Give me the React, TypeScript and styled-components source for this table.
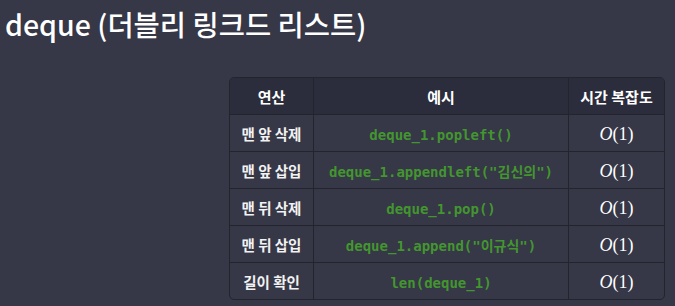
import styled, { createGlobalStyle } from "styled-components";

const GlobalStyle = createGlobalStyle`
  html, body {
    margin: 0;
    padding: 0;
    background: #363747;
  }
  body {
    font-family: "Noto Sans CJK KR", "Noto Sans", sans-serif;
    color: #ffffff;
  }
`;

const Page = styled.div`
  width: 675px;
  height: 306px;
  box-sizing: border-box;
  padding: 5px 10px 0 5px;
  display: flex;
  flex-direction: column;
`;

const Title = styled.h1`
  margin: 0;
  font-size: 28.5px;
  font-weight: 500;
  line-height: 38px;
`;

const TableWrap = styled.div`
  display: flex;
  justify-content: flex-end;
  margin-top: 34px;
`;

const Table = styled.table`
  width: 434px;
  border-collapse: separate;
  border-spacing: 0;
  border: 1px solid #23242e;
  border-radius: 5px;
  overflow: hidden;
  table-layout: fixed;
`;

const Th = styled.th<{ w: number }>`
  width: ${(p) => p.w}px;
  height: 36px;
  padding: 0;
  background: #2b2c3c;
  font-size: 15px;
  font-weight: 700;
  color: #ffffff;
  text-align: center;
  border-bottom: 1px solid #23242e;
  &:not(:last-child) {
    border-right: 1px solid #23242e;
  }
`;

const Td = styled.td`
  height: 36px;
  padding: 0;
  text-align: center;
  border-right: 1px solid #23242e;
  tr:not(:last-child) & {
    border-bottom: 1px solid #23242e;
  }
  &:last-child {
    border-right: none;
  }
`;

const OpCell = styled(Td)`
  font-size: 14.5px;
  font-weight: 700;
  color: #f2f2f2;
`;

const Code = styled.code`
  font-family: "DejaVu Sans Mono", "Noto Sans CJK KR", monospace;
  font-size: 14px;
  font-weight: 700;
  color: #43962f;
  white-space: nowrap;
`;

const Math = styled.span`
  font-family: "Liberation Serif", "DejaVu Serif", serif;
  font-size: 18px;
  color: #ffffff;
  i {
    font-style: italic;
  }
`;

const rows = [
  { op: "맨 앞 삭제", code: "deque_1.popleft()" },
  { op: "맨 앞 삽입", code: 'deque_1.appendleft("김신의")' },
  { op: "맨 뒤 삭제", code: "deque_1.pop()" },
  { op: "맨 뒤 삽입", code: 'deque_1.append("이규식")' },
  { op: "길이 확인", code: "len(deque_1)" },
];

export default function App() {
  return (
    <>
      <GlobalStyle />
      <Page>
        <Title>deque (더블리 링크드 리스트)</Title>
        <TableWrap>
          <Table>
            <thead>
              <tr>
                <Th w={83}>연산</Th>
                <Th w={254}>예시</Th>
                <Th w={95}>시간 복잡도</Th>
              </tr>
            </thead>
            <tbody>
              {rows.map((r) => (
                <tr key={r.op}>
                  <OpCell>{r.op}</OpCell>
                  <Td>
                    <Code>{r.code}</Code>
                  </Td>
                  <Td>
                    <Math>
                      <i>O</i>(1)
                    </Math>
                  </Td>
                </tr>
              ))}
            </tbody>
          </Table>
        </TableWrap>
      </Page>
    </>
  );
}
